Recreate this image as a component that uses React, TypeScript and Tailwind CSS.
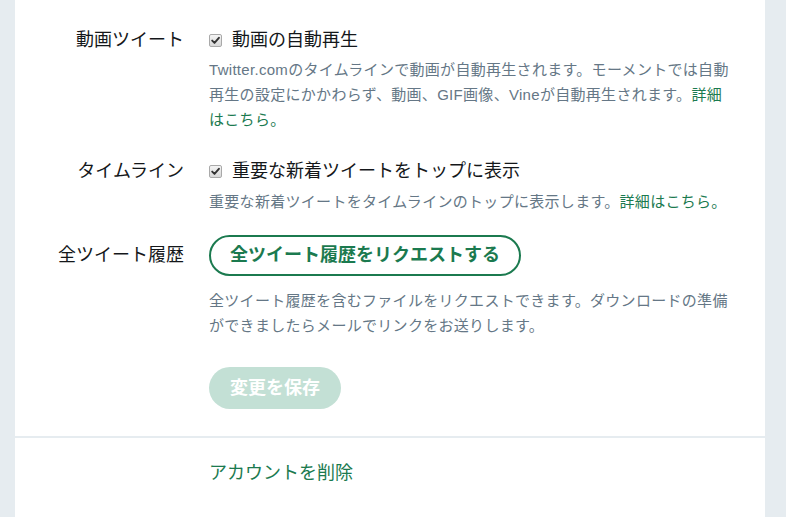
import React from "react";

const font = { fontFamily: '"Liberation Sans", "Noto Sans CJK JP", sans-serif' };

const Check: React.FC = () => (
  <span className="flex h-[13px] w-[13px] items-center justify-center rounded-[2px] border border-[#a9a9a9] bg-gradient-to-b from-[#f4f4f4] to-[#d8d8d8]">
    <svg width="9" height="9" viewBox="0 0 9 9" fill="none">
      <path d="M1.2 4.6 L3.5 6.9 L7.9 1.8" stroke="#333" strokeWidth="1.9" strokeLinecap="round" strokeLinejoin="round" />
    </svg>
  </span>
);

const Label: React.FC<{ children: React.ReactNode; tall?: boolean }> = ({ children, tall }) => (
  <div
    className={`w-[169px] shrink-0 text-right text-[18px] text-[#14171a] ${
      tall ? "leading-[41px]" : "leading-[24px]"
    }`}
  >
    {children}
  </div>
);

const Link: React.FC<{ children: React.ReactNode }> = ({ children }) => (
  <a className="text-[#1b7a4f] cursor-pointer">{children}</a>
);

export default function App() {
  return (
    <div className="min-h-screen bg-[#e6ecf0] pl-[15px]" style={font}>
      <div className="w-[750px] bg-white">
        <div className="border-b-2 border-[#e6ecf0] pt-[28px] pb-[27px]">
          {/* 動画ツイート */}
          <div className="flex">
            <Label>動画ツイート</Label>
            <div className="ml-[25px]">
              <label className="flex h-[24px] items-center gap-[10px] text-[18px] text-[#14171a]">
                <Check />
                動画の自動再生
              </label>
              <p className="mt-[5px] whitespace-nowrap text-[15px] leading-[25px] tracking-[0.3px] text-[#657786]">
                Twitter.comのタイムラインで動画が自動再生されます。モーメントでは自動
                <br />
                再生の設定にかかわらず、動画、GIF画像、Vineが自動再生されます。<Link>詳細</Link>
                <br />
                <Link>はこちら。</Link>
              </p>
            </div>
          </div>

          {/* タイムライン */}
          <div className="mt-[27px] flex">
            <Label>タイムライン</Label>
            <div className="ml-[25px]">
              <label className="flex h-[24px] items-center gap-[10px] text-[18px] text-[#14171a]">
                <Check />
                重要な新着ツイートをトップに表示
              </label>
              <p className="mt-[6px] whitespace-nowrap text-[15px] leading-[25px] tracking-[0.3px] text-[#657786]">
                重要な新着ツイートをタイムラインのトップに表示します。<Link>詳細はこちら。</Link>
              </p>
            </div>
          </div>

          {/* 全ツイート履歴 */}
          <div className="mt-[21px] flex">
            <Label tall>全ツイート履歴</Label>
            <div className="ml-[25px]">
              <button className="h-[41px] rounded-full border-2 border-[#1b7a4f] px-[19px] text-[18px] font-bold text-[#1b7a4f]">
                全ツイート履歴をリクエストする
              </button>
              <p className="mt-[12px] whitespace-nowrap text-[15px] leading-[25px] tracking-[0.3px] text-[#657786]">
                全ツイート履歴を含むファイルをリクエストできます。ダウンロードの準備
                <br />
                ができましたらメールでリンクをお送りします。
              </p>
              <button className="mt-[29px] h-[42px] rounded-full bg-[#c3e0d5] px-[21px] text-[18px] font-bold text-white">
                変更を保存
              </button>
            </div>
          </div>
        </div>

        <div className="pt-[23px] pb-[40px] pl-[194px]">
          <Link>
            <span className="text-[18px] leading-[24px]">アカウントを削除</span>
          </Link>
        </div>
      </div>
    </div>
  );
}
